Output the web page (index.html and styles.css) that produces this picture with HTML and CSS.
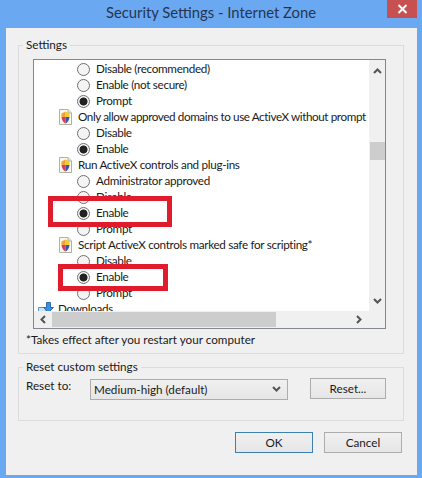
FILE: index.html
```html
<!DOCTYPE html>
<html lang="en">
<head>
    <meta charset="UTF-8">
    <title>Security Settings - Internet Zone</title>
    <link rel="stylesheet" href="styles.css">
</head>
<body>

    <!-- Title bar -->
    <header class="titlebar">
        <h1>Security Settings - Internet Zone</h1>
        <div class="close">
            <svg width="11" height="10" viewBox="0 0 11 10"><path d="M1.5 1 L9.5 9 M9.5 1 L1.5 9" stroke="#fff" stroke-width="2"/></svg>
        </div>
    </header>

    <div class="client">
        <!-- Settings group -->
        <fieldset class="group settings">
            <legend>Settings</legend>
            <div class="list">
                <div class="rows">
                    <div class="row opt"><span class="radio"></span>Disable (recommended)</div>
                    <div class="row opt"><span class="radio"></span>Enable (not secure)</div>
                    <div class="row opt"><span class="radio on"></span>Prompt</div>
                    <div class="row head long">
                        <svg class="doc" width="13" height="16" viewBox="0 0 13 16"><use href="#shield-doc"/></svg>
                        Only allow approved domains to use ActiveX without prompt
                    </div>
                    <div class="row opt"><span class="radio"></span>Disable</div>
                    <div class="row opt"><span class="radio on"></span>Enable</div>
                    <div class="row head">
                        <svg class="doc" width="13" height="16" viewBox="0 0 13 16"><use href="#shield-doc"/></svg>
                        Run ActiveX controls and plug-ins
                    </div>
                    <div class="row opt"><span class="radio"></span>Administrator approved</div>
                    <div class="row opt"><span class="radio"></span>Disable</div>
                    <div class="row opt"><span class="radio on"></span>Enable</div>
                    <div class="row opt"><span class="radio"></span>Prompt</div>
                    <div class="row head">
                        <svg class="doc" width="13" height="16" viewBox="0 0 13 16"><use href="#shield-doc"/></svg>
                        Script ActiveX controls marked safe for scripting*
                    </div>
                    <div class="row opt"><span class="radio"></span>Disable</div>
                    <div class="row opt"><span class="radio on"></span>Enable</div>
                    <div class="row opt"><span class="radio"></span>Prompt</div>
                    <div class="row top">
                        <svg class="dl" width="16" height="15" viewBox="0 0 16 15">
                            <path d="M0.5 5.5 H8 V14.5 H0.5 Z" fill="#cfe4f2" stroke="#5f93b8"/>
                            <path d="M2 9 H5 V13 H2 Z" fill="#2f78b8"/>
                            <path d="M8.5 0.5 H12.5 V5.5 H15.5 L10.5 10.5 L5.5 5.5 H8.5 Z" fill="#3f8fe0" stroke="#2a6cb8"/>
                        </svg>
                        Downloads
                    </div>
                </div>
                <div class="vscroll">
                    <svg class="arrow" width="9" height="6" viewBox="0 0 9 6"><path d="M1 5 L4.5 1.5 L8 5" fill="none" stroke="#555" stroke-width="2"/></svg>
                    <div class="vthumb"></div>
                    <svg class="arrow arrow-down" width="9" height="6" viewBox="0 0 9 6"><path d="M1 1 L4.5 4.5 L8 1" fill="none" stroke="#555" stroke-width="2"/></svg>
                </div>
                <div class="hscroll">
                    <svg class="arrow" width="6" height="9" viewBox="0 0 6 9"><path d="M5 1 L1.5 4.5 L5 8" fill="none" stroke="#555" stroke-width="2"/></svg>
                    <div class="hthumb"></div>
                    <svg class="arrow" width="6" height="9" viewBox="0 0 6 9"><path d="M1 1 L4.5 4.5 L1 8" fill="none" stroke="#555" stroke-width="2"/></svg>
                </div>
                <div class="corner"></div>

                <!-- Red marks drawn over the list -->
                <div class="mark mark-run"></div>
                <div class="mark mark-script"></div>
            </div>
            <p class="note">*Takes effect after you restart your computer</p>
        </fieldset>

        <!-- Reset group -->
        <fieldset class="group reset">
            <legend>Reset custom settings</legend>
            <div class="reset-row">
                <span class="reset-label">Reset to:</span>
                <div class="select">
                    Medium-high (default)
                    <svg width="9" height="6" viewBox="0 0 9 6"><path d="M1 1 L4.5 4.5 L8 1" fill="none" stroke="#555" stroke-width="2"/></svg>
                </div>
                <button class="btn btn-reset">Reset...</button>
            </div>
        </fieldset>

        <!-- Buttons -->
        <div class="actions">
            <button class="btn btn-main default">OK</button>
            <button class="btn btn-main">Cancel</button>
        </div>
    </div>

    <!-- Shared icon -->
    <svg width="0" height="0" class="defs">
        <defs>
            <g id="shield-doc">
                <path d="M0.5 0.5 H9 L12.5 4 V15.5 H0.5 Z" fill="#fbf8ec" stroke="#b0b0a8"/>
                <path d="M9 0.5 V4 H12.5" fill="#e8e4c8" stroke="#b0b0a8"/>
                <path d="M6.5 2.5 L10.5 4.5 V8 H6.5 Z" fill="#f4c92e"/>
                <path d="M6.5 2.5 L2.5 4.5 V8 H6.5 Z" fill="#eda33a"/>
                <path d="M2.5 8 H6.5 V14.5 C4.2 13.5 2.8 11 2.5 8 Z" fill="#d2405a"/>
                <path d="M10.5 8 H6.5 V14.5 C8.8 13.5 10.2 11 10.5 8 Z" fill="#3a55b4"/>
            </g>
        </defs>
    </svg>

</body>
</html>
```

FILE: styles.css
```css
/* General */
body {
    margin: 0;
    width: 422px;
    height: 478px;
    overflow: hidden;
    background-color: #6ba8f2;
    font-family: 'Lato', 'Open Sans', Arial, sans-serif;
    font-size: 11.7px;
    color: #1a1a1a;
}

.defs {
    position: absolute;
}

/* Title bar */
.titlebar {
    position: relative;
    height: 28px;
}

.titlebar h1 {
    margin: 0;
    font-size: 14.8px;
    font-weight: normal;
    line-height: 24px;
    text-align: center;
    color: #24364f;
}

.close {
    position: absolute;
    top: 0;
    right: 5px;
    width: 30px;
    height: 18px;
    display: flex;
    align-items: center;
    justify-content: center;
    background-color: #c75050;
}

/* Main area */
.client {
    margin: 0 5px 0 6px;
    height: 447px;
    padding: 9px 13px 0 12px;
    box-sizing: border-box;
    background-color: #f0f0f0;
}

.group {
    margin: 0;
    padding: 0 17px 0 7px;
    border: 1px solid #dcdcdc;
    min-width: 0;
}

.group legend {
    margin-left: -3px;
    padding: 0 3px 2px;
    line-height: 14px;
}

/* List box */
.list {
    position: relative;
    display: grid;
    grid-template-columns: 1fr 16px;
    grid-template-rows: 251px 17px;
    width: 351px;
    margin: 6px 0 0 7px;
    border: 1px solid #828790;
    background-color: #fff;
}

.rows {
    overflow: hidden;
    letter-spacing: -0.32px;
}

.row {
    display: flex;
    align-items: center;
    height: 16px;
    white-space: nowrap;
}

.opt {
    padding-left: 43px;
}

.head {
    padding-left: 25px;
}

.long {
    letter-spacing: -0.41px;
}

.top {
    padding-left: 4px;
}

.doc {
    margin: 2px 6px 0 0;
    flex: none;
}

.dl {
    margin: 2px 4px 0 0;
    flex: none;
}

.radio {
    width: 13px;
    height: 13px;
    margin: 2px 6px 0 0;
    box-sizing: border-box;
    border: 1px solid #707070;
    border-radius: 50%;
    background-color: #f4f4f4;
    flex: none;
}

.radio.on {
    background: radial-gradient(circle, #222 0, #222 3.6px, #f4f4f4 4.4px);
}

/* Scroll bars */
.vscroll {
    position: relative;
    display: flex;
    flex-direction: column;
    align-items: center;
    background-color: #f0f0f0;
}

.vscroll .arrow {
    margin-top: 8px;
}

.vscroll .arrow-down {
    margin-top: auto;
    margin-bottom: 7px;
}

.vthumb {
    width: 15px;
    height: 18px;
    margin-top: 68px;
    background-color: #cdcdcd;
}

.hscroll {
    display: flex;
    align-items: center;
    padding: 0 7px 0 6px;
    background-color: #f0f0f0;
}

.hthumb {
    width: 224px;
    height: 15px;
    margin-left: 6px;
    margin-right: auto;
    background-color: #cdcdcd;
}

.corner {
    background-color: #f0f0f0;
}

/* Red marks */
.mark {
    position: absolute;
    box-sizing: border-box;
    border: 5px solid #e01b2b;
}

.mark-run {
    left: 14px;
    top: 136px;
    width: 124px;
    height: 31px;
}

.mark-script {
    left: 24px;
    top: 204px;
    width: 110px;
    height: 27px;
}

.note {
    margin: 2px 0 6px 0;
    line-height: 16px;
}

/* Reset */
.reset {
    margin-top: 5px;
    height: 60px;
}

.reset-row {
    display: flex;
    align-items: flex-start;
    margin-top: 3px;
}

.reset-label {
    width: 64px;
    line-height: 14px;
}

.select {
    display: flex;
    align-items: center;
    justify-content: space-between;
    width: 198px;
    height: 21px;
    padding: 0 6px 2px 3px;
    margin-top: 1px;
    box-sizing: border-box;
    border: 1px solid #acacac;
    background: linear-gradient(#f0f0f0, #e6e6e6);
}

.btn {
    height: 21px;
    padding: 0 0 2px;
    box-sizing: border-box;
    border: 1px solid #acacac;
    background: linear-gradient(#f0f0f0, #e6e6e6);
    font: inherit;
    color: inherit;
}

.btn-reset {
    width: 76px;
    margin-left: 22px;
}

/* Bottom buttons */
.actions {
    display: flex;
    justify-content: flex-end;
    gap: 11px;
    margin: 11px 2px 0 0;
}

.btn-main {
    width: 78px;
}

.default {
    border-color: #3c7fb1;
}
```
